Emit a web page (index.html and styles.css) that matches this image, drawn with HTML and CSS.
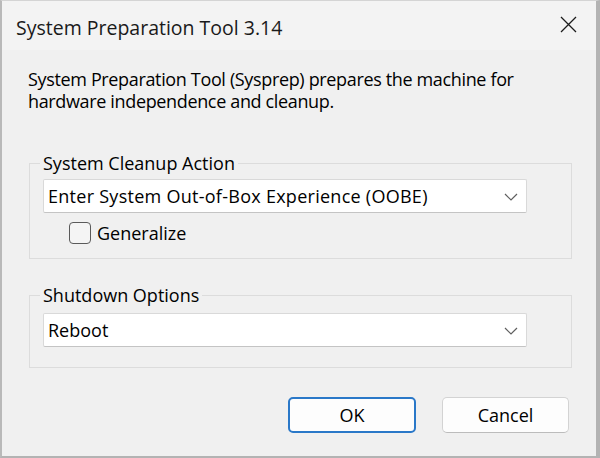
FILE: index.html
```html
<!DOCTYPE html>
<html>
<head>
<meta charset="utf-8">
<link rel="stylesheet" href="styles.css">
</head>
<body>
<div class="window">
  <div class="titlebar">
    <span class="title">System Preparation Tool 3.14</span>
    <svg class="close" width="17" height="17" viewBox="0 0 17 17"><path d="M1 1 L16 16 M16 1 L1 16" stroke="#1b1b1b" stroke-width="1.3" fill="none"/></svg>
  </div>
  <p class="desc">System Preparation Tool (Sysprep) prepares the machine for<br>hardware independence and cleanup.</p>
  <fieldset class="group group-cleanup">
    <legend>System Cleanup Action</legend>
    <div class="combo">
      <span class="combo-text wide">Enter System Out-of-Box Experience (OOBE)</span>
      <svg class="chev" width="14" height="8" viewBox="0 0 14 8"><path d="M1 1 L7 7 L13 1" stroke="#5f5f5f" stroke-width="1.2" fill="none"/></svg>
    </div>
    <label class="check">
      <span class="box"></span>
      <span>Generalize</span>
    </label>
  </fieldset>
  <fieldset class="group group-shutdown">
    <legend>Shutdown Options</legend>
    <div class="combo">
      <span class="combo-text">Reboot</span>
      <svg class="chev" width="14" height="8" viewBox="0 0 14 8"><path d="M1 1 L7 7 L13 1" stroke="#5f5f5f" stroke-width="1.2" fill="none"/></svg>
    </div>
  </fieldset>
  <div class="buttons">
    <button class="btn btn-default">OK</button>
    <button class="btn">Cancel</button>
  </div>
</div>
</body>
</html>
```
FILE: styles.css
```css
html, body {
  margin: 0;
  padding: 0;
  background: #f0f0f0;
}
body {
  width: 600px;
  height: 458px;
  overflow: hidden;
  font-family: "Open Sans", "Noto Sans", sans-serif;
  color: #000;
}
.window {
  box-sizing: border-box;
  width: 600px;
  height: 458px;
  background: #f0f0f0;
  border-top: 1px solid #d4d4d4;
  border-left: 2px solid #b9b9b9;
  border-right: 4px solid #b3b3b3;
  border-bottom: 2px solid #b3b3b3;
  display: flex;
  flex-direction: column;
}
.titlebar {
  height: 49px;
  background: #f3f3f3;
  display: flex;
  align-items: center;
  justify-content: space-between;
  padding: 5px 19px 0 14px;
  box-sizing: border-box;
}
.title {
  font-size: 19.5px;
  color: #1a1a1a;
  line-height: 24px;
}
.close {
  display: block;
  margin-top: -8px;
}
.desc {
  margin: 18px 0 0 26px;
  font-size: 18px;
  line-height: 22px;
  letter-spacing: -0.35px;
}
.group {
  margin: 0 24px 0 27px;
  width: 543px;
  box-sizing: border-box;
  border: 1px solid #dcdcdc;
  padding: 0 0 0 13px;
}
.group legend {
  font-size: 18px;
  line-height: 20px;
  padding: 0 3px;
  margin-left: -3px;
}
.group-cleanup {
  margin-top: 41px;
  padding-top: 6px;
  padding-bottom: 14px;
}
.group-shutdown {
  margin-top: 26px;
  padding-top: 8px;
  padding-bottom: 20px;
}
.combo {
  box-sizing: border-box;
  width: 484px;
  height: 34px;
  background: #fff;
  border: 1px solid #d9d9d9;
  border-bottom-color: #c4c4c4;
  border-radius: 2px;
  display: flex;
  align-items: center;
  justify-content: space-between;
  padding: 0 8px 0 4px;
  font-size: 18px;
}
.combo-text.wide {
  letter-spacing: 0.27px;
}
.chev {
  display: block;
  margin-top: 1px;
}
.check {
  display: flex;
  align-items: center;
  margin: 9px 0 0 26px;
  height: 22px;
  font-size: 18px;
  line-height: 22px;
}
.box {
  box-sizing: border-box;
  width: 22px;
  height: 22px;
  border: 1px solid #5a5a5a;
  border-radius: 4px;
  background: #f4f4f4;
  margin-right: 6px;
}
.buttons {
  display: flex;
  justify-content: flex-end;
  gap: 26px;
  margin: 29px 27px 0 0;
}
.btn {
  box-sizing: border-box;
  width: 127px;
  height: 36px;
  background: #fdfdfd;
  border: 1px solid #d3d3d3;
  border-bottom-color: #bcbcbc;
  border-radius: 5px;
  font-family: "Open Sans", "Noto Sans", sans-serif;
  font-size: 18px;
  color: #000;
  padding: 0;
}
.btn-default {
  width: 128px;
  border: 2px solid #2a78c8;
}
```
